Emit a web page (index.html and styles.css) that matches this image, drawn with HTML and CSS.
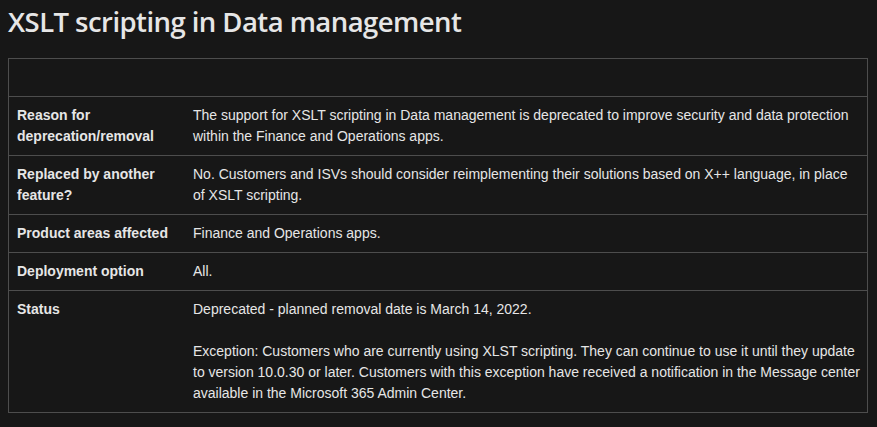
FILE: index.html
```html
<!DOCTYPE html>
<html lang="en">
<head>
<meta charset="utf-8">
<title>XSLT scripting in Data management</title>
<link rel="stylesheet" href="styles.css">
</head>
<body>
<main class="content">
  <h1 class="title">XSLT scripting in Data management</h1>
  <table class="info">
    <thead>
      <tr><th class="label">&nbsp;</th><th class="value">&nbsp;</th></tr>
    </thead>
    <tbody>
      <tr>
        <td class="label">Reason for deprecation/removal</td>
        <td class="value">The support for XSLT scripting in Data management is deprecated to improve security and data protection within the Finance and Operations apps.</td>
      </tr>
      <tr>
        <td class="label">Replaced by another feature?</td>
        <td class="value">No. Customers and ISVs should consider reimplementing their solutions based on X++ language, in place of XSLT scripting.</td>
      </tr>
      <tr>
        <td class="label">Product areas affected</td>
        <td class="value">Finance and Operations apps.</td>
      </tr>
      <tr>
        <td class="label">Deployment option</td>
        <td class="value">All.</td>
      </tr>
      <tr>
        <td class="label">Status</td>
        <td class="value">Deprecated - planned removal date is March 14, 2022.<br><br>Exception: Customers who are currently using XLST scripting. They can continue to use it until they update to version 10.0.30 or later. Customers with this exception have received a notification in the Message center available in the Microsoft 365 Admin Center.</td>
      </tr>
    </tbody>
  </table>
</main>
</body>
</html>
```

FILE: styles.css
```css
html, body {
  margin: 0;
  padding: 0;
  background: #171717;
}
body {
  color: #e6e6e6;
  font-family: "Liberation Sans", Arial, sans-serif;
}
.content {
  padding: 0 10px 0 8px;
}
.title {
  margin: 0;
  padding-top: 2px;
  font-family: "Open Sans", "Noto Sans", sans-serif;
  font-size: 27.5px;
  letter-spacing: -0.55px;
  font-weight: 600;
  line-height: 40px;
  color: #e6e6e6;
}
.info {
  margin-top: 16px;
  width: 860px;
  border-collapse: collapse;
  border: 1px solid #4d4d4d;
  font-size: 14px;
  line-height: 21px;
}
.info th, .info td {
  padding: 8px;
  text-align: left;
  vertical-align: top;
  border-top: 1px solid #4d4d4d;
}
.info .value {
  padding-right: 4px;
}
.info td.label {
  font-weight: 700;
  width: 160px;
}
```
